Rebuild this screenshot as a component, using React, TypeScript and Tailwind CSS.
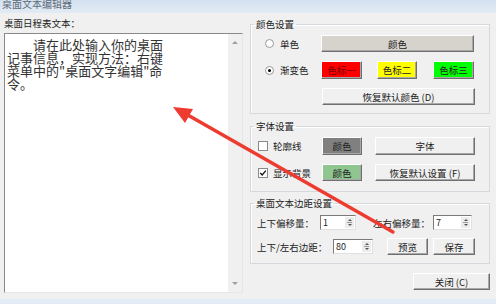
import React from 'react';

const ui = 'font-["Noto_Sans_CJK_SC",sans-serif] text-[9.5px] leading-[12px] text-[#222]';

function Btn({
  children,
  className = '',
}: {
  children?: React.ReactNode;
  className?: string;
}) {
  return (
    <div
      className={`flex items-center justify-center border border-t-white border-l-white border-r-[#6f6f6f] border-b-[#6f6f6f] shadow-[inset_-1px_-1px_0_#a8a8a8] ${className}`}
    >
      {children}
    </div>
  );
}

function Radio({ checked }: { checked?: boolean }) {
  return (
    <span className="flex h-[9px] w-[9px] items-center justify-center rounded-full border border-[#9a9a9a] bg-white">
      {checked && <span className="h-[3px] w-[3px] rounded-full bg-black" />}
    </span>
  );
}

function Check({ checked }: { checked?: boolean }) {
  return (
    <span className="flex h-[10px] w-[10px] items-center justify-center border border-[#8a8a8a] bg-white">
      {checked && (
        <svg viewBox="0 0 10 10" className="h-[8px] w-[8px]">
          <path d="M1.5 5 L4 7.5 L8.5 2" fill="none" stroke="#111" strokeWidth="1.6" />
        </svg>
      )}
    </span>
  );
}

function Spin({ value, className = '' }: { value: string; className?: string }) {
  return (
    <div
      className={`flex h-[15px] border border-t-[#7a7a7a] border-l-[#7a7a7a] border-r-[#e0e0e0] border-b-[#e0e0e0] bg-white ${className}`}
    >
      <span className="flex-1 pl-[2px] text-[9px] leading-[13px]">{value}</span>
      <div className="my-[1px] mr-[1px] flex w-[9px] flex-col items-center justify-center gap-[1px] bg-[#ececec]">
        <span className="block h-0 w-0 border-x-[2px] border-b-[2px] border-x-transparent border-b-[#555]" />
        <span className="block h-[1px] w-[5px] bg-[#999]" />
        <span className="block h-0 w-0 border-x-[2px] border-t-[2px] border-x-transparent border-t-[#555]" />
      </div>
    </div>
  );
}

function Group({
  title,
  children,
  className = '',
}: {
  title: string;
  children: React.ReactNode;
  className?: string;
}) {
  return (
    <fieldset className={`border border-[#d5d9dd] shadow-[inset_1px_1px_0_#fff] ${className}`}>
      <legend className="ml-[3px] px-[2px]">{title}</legend>
      {children}
    </fieldset>
  );
}

export default function App() {
  return (
    <div className={`relative flex h-[304px] w-[496px] flex-col overflow-hidden bg-[#f0f0f0] ${ui}`}>
      {/* title bar, cut off at the top as in the capture */}
      <div className="h-[13px] overflow-hidden bg-gradient-to-b from-[#d3e1f0] to-[#e2ebf5] pl-[2px]">
        <div className="-mt-[3px] text-[10px] leading-[13px] text-[#5f6b78]">桌面文本编辑器</div>
      </div>

      <div className="flex flex-1 gap-[7px] pl-[4px]">
        {/* left: text box */}
        <div className="flex w-[239px] flex-col pt-[4px]">
          <div className="h-[12px]">桌面日程表文本：</div>
          <div className="mt-[4px] flex h-[260px] border border-t-[#8a8a8a] border-l-[#8a8a8a] border-r-[#e6e6e6] border-b-[#e6e6e6] bg-white">
            <div className="flex-1 whitespace-pre pl-[2px] pt-[4px] text-[13px] leading-[13px] text-[#333]">
              {'　　请在此处输入你的桌面\n记事信息，实现方法：右键\n菜单中的"桌面文字编辑"命\n令。'}
            </div>
            <div className="flex w-[14px] flex-col items-center justify-between bg-[#f0f0f0] py-[7px]">
              <span className="block h-0 w-0 border-x-[3px] border-b-[3px] border-x-transparent border-b-[#a0a0a0]" />
              <span className="block h-0 w-0 border-x-[3px] border-t-[3px] border-x-transparent border-t-[#a0a0a0]" />
            </div>
          </div>
        </div>

        {/* right: settings */}
        <div className="flex w-[240px] flex-col pt-[5px]">
          <Group title="颜色设置" className="pb-[8px]">
            <div className="mt-[5px] flex h-[17px] items-center">
              <div className="flex w-[70px] items-center gap-[6px] pl-[14px]">
                <Radio />
                <span>单色</span>
              </div>
              <Btn className="h-[17px] w-[153px] bg-[#d6d2cc]">颜色</Btn>
            </div>
            <div className="mt-[9px] flex h-[18px] items-center">
              <div className="flex w-[70px] items-center gap-[6px] pl-[14px]">
                <Radio checked />
                <span>渐变色</span>
              </div>
              <Btn className="h-[18px] w-[41px] bg-[#ff0000] text-[#7a0000]">色标一</Btn>
              <Btn className="ml-[15px] h-[18px] w-[40px] bg-[#ffff00]">色标二</Btn>
              <Btn className="ml-[16px] h-[18px] w-[41px] bg-[#00ff00]">色标三</Btn>
            </div>
            <div className="mt-[9px] flex h-[17px] items-center">
              <div className="w-[71px]" />
              <Btn className="h-[17px] w-[153px] bg-[#f0f0f0]">恢复默认颜色 (D)</Btn>
            </div>
          </Group>

          <Group title="字体设置" className="mt-[6px] pb-[10px]">
            <div className="mt-[5px] flex h-[18px] items-center">
              <div className="flex w-[71px] items-center gap-[5px] pl-[7px]">
                <Check />
                <span>轮廓线</span>
              </div>
              <Btn className="h-[18px] w-[40px] bg-[#808080]">颜色</Btn>
              <Btn className="ml-[13px] h-[18px] w-[100px] bg-[#f0f0f0]">字体</Btn>
            </div>
            <div className="mt-[9px] flex h-[17px] items-center">
              <div className="flex w-[71px] items-center gap-[5px] pl-[7px]">
                <Check checked />
                <span>显示背景</span>
              </div>
              <Btn className="h-[17px] w-[40px] bg-[#8fc58f]">颜色</Btn>
              <Btn className="ml-[13px] h-[17px] w-[100px] bg-[#f0f0f0]">恢复默认设置 (F)</Btn>
            </div>
          </Group>

          <Group title="桌面文本边距设置" className="mt-[5px] pb-[8px]">
            <div className="mt-[6px] flex h-[15px] items-center pl-[6px]">
              <span className="w-[63px]">上下偏移量：</span>
              <Spin value="1" className="w-[36px]" />
              <span className="ml-[17px] w-[60px]">左右偏移量：</span>
              <Spin value="7" className="w-[39px]" />
            </div>
            <div className="mt-[8px] flex h-[17px] items-center pl-[6px]">
              <span className="w-[76px]">上下/左右边距：</span>
              <Spin value="80" className="w-[40px]" />
              <Btn className="ml-[14px] h-[17px] w-[41px] bg-[#f0f0f0]">预览</Btn>
              <Btn className="ml-[5px] h-[17px] w-[42px] bg-[#f0f0f0]">保存</Btn>
            </div>
          </Group>

          <div className="mt-[9px] flex justify-end">
            <Btn className="h-[17px] w-[77px] bg-[#f0f0f0]">关闭 (C)</Btn>
          </div>
        </div>
      </div>

      <div className="h-[5px] bg-[#e3ecf6]" />

      {/* red annotation arrow */}
      <svg className="pointer-events-none absolute left-0 top-0" width="496" height="304">
        <line x1="186" y1="114" x2="393" y2="232" stroke="#ee3b30" strokeWidth="3.5" strokeLinecap="round" />
        <polygon points="173,107 193,109 185,123" fill="#ee3b30" />
      </svg>
    </div>
  );
}
